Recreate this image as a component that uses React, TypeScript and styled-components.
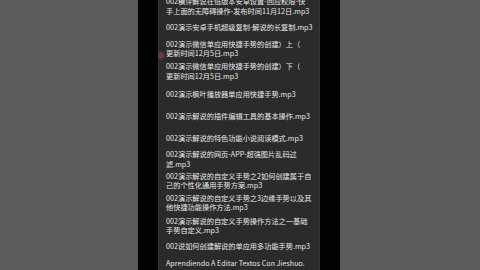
import React from "react";
import styled, { createGlobalStyle } from "styled-components";

const Global = createGlobalStyle`
  html, body { margin: 0; padding: 0; background: #000; }
  body { width: 480px; height: 270px; overflow: hidden; }
  #root { width: 480px; height: 270px; }
`;

const Stage = styled.div`
  width: 480px;
  height: 270px;
  display: grid;
  grid-template-columns: 138px 20px 162px 20px 1fr;
  overflow: hidden;
  background: #000;
`;

const BlurSide = styled.div`
  background: #5b5b5b;
`;

const Gutter = styled.div`
  background: #020202;
`;

const Screen = styled.div`
  position: relative;
  background: #2b2b2b;
  overflow: hidden;
  box-shadow: inset 1px 0 0 #343434, inset -1px 0 0 #363636;
`;

const List = styled.ul`
  list-style: none;
  margin: -4.5px 0 0 0;
  padding: 0;
  display: flex;
  flex-direction: column;
`;

const Item = styled.li<{ $h: number }>`
  height: ${(p) => p.$h}px;
  padding: 0 0 0 8px;
  display: flex;
  flex-direction: column;
  justify-content: center;
  font-family: "Noto Sans CJK SC", "Noto Sans", sans-serif;
  font-size: 7.2px;
  line-height: 9.5px;
  color: #e8e8e8;
  white-space: nowrap;
  overflow: visible;
`;

const Line = styled.span`
  display: block;
`;

const EdgeMark = styled.div`
  position: absolute;
  left: 0px;
  top: 52px;
  width: 6px;
  height: 7px;
  border-radius: 50%;
  background: #7a3c3c;
  filter: blur(1.2px);
`;

const items: { lines: string[]; h: number }[] = [
  { lines: ["002横评解说在低版本安卓设置-回应权限-快", "手上面的无障碍操作-发布时间11月12日.mp3"], h: 22 },
  { lines: ["002演示安卓手机超级复制-解说的长复制.mp3"], h: 20 },
  { lines: ["002演示微信单应用快捷手势的创建）上（", "更新时间12月5日.mp3"], h: 23 },
  { lines: ["002演示微信单应用快捷手势的创建）下（", "更新时间12月5日.mp3"], h: 22.5 },
  { lines: ["002演示枫叶播放器单应用快捷手势.mp3"], h: 23 },
  { lines: ["002演示解说的插件编辑工具的基本操作.mp3"], h: 22 },
  { lines: ["002演示解说的特色功能小说阅读模式.mp3"], h: 21 },
  { lines: ["002演示解说的网页-APP-超强图片乱码过", "滤.mp3"], h: 21.5 },
  { lines: ["002演示解说的自定义手势之2如何创建属于自", "己的个性化通用手势方案.mp3"], h: 21 },
  { lines: ["002演示解说的自定义手势之3边缘手势以及其", "他快捷功能操作方法.mp3"], h: 23 },
  { lines: ["002演示解说的自定义手势操作方法之一基础", "手势自定义.mp3"], h: 23 },
  { lines: ["002说如何创建解说的单应用多功能手势.mp3"], h: 19 },
  { lines: ["Aprendiendo A Editar Textos Con Jieshuo."], h: 14 },
];

export default function App() {
  return (
    <>
      <Global />
      <Stage>
        <BlurSide />
        <Gutter />
        <Screen>
          <List>
            {items.map((it, i) => (
              <Item key={i} $h={it.h}>
                {it.lines.map((l, j) => (
                  <Line key={j}>{l}</Line>
                ))}
              </Item>
            ))}
          </List>
          <EdgeMark />
        </Screen>
        <Gutter />
        <BlurSide />
      </Stage>
    </>
  );
}
